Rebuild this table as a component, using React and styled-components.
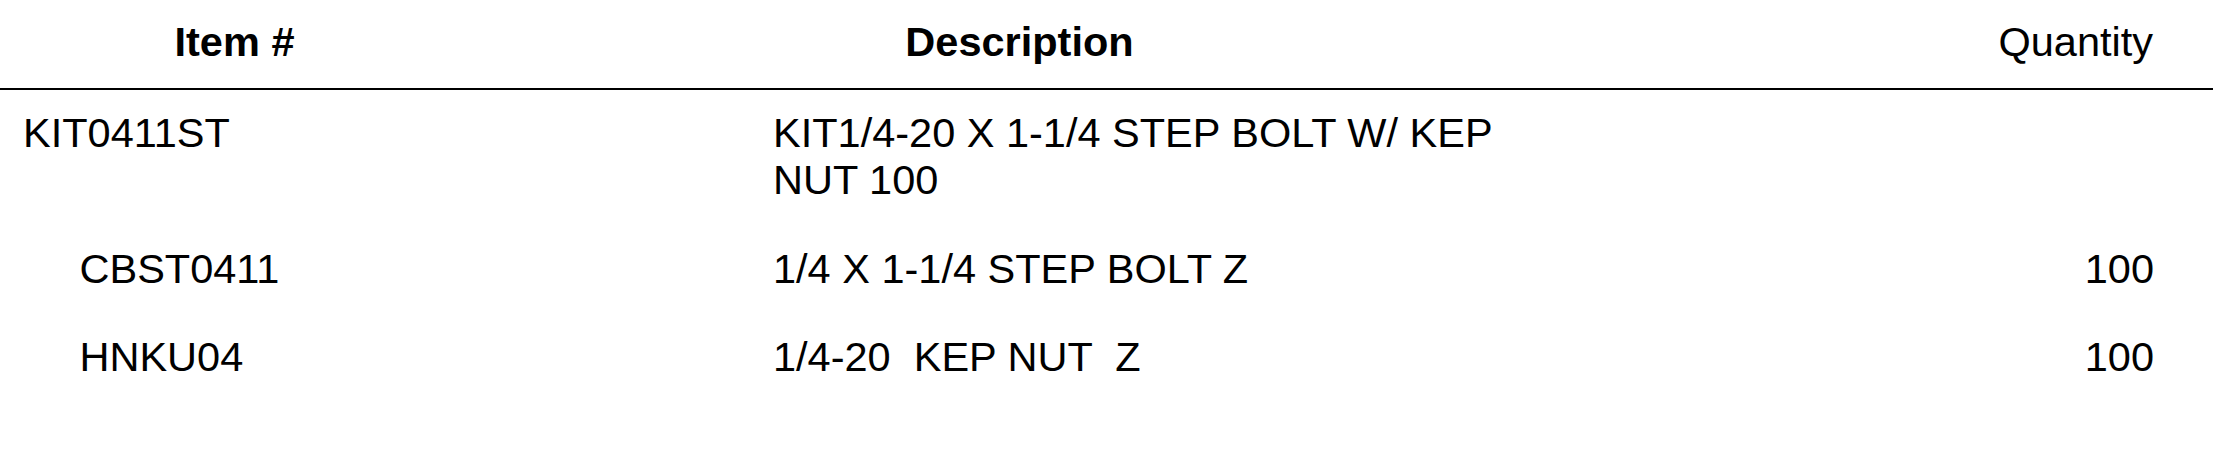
import React from 'react';
import styled, { createGlobalStyle } from 'styled-components';

const GlobalStyle = createGlobalStyle`
  body {
    margin: 0;
    background: #fff;
    color: #000;
    font-family: "Liberation Sans", Arial, sans-serif;
  }
`;

const Table = styled.div`
  width: 2213px;
  font-size: 41.5px;
  line-height: 47.5px;
`;

const Grid = styled.div`
  display: grid;
  grid-template-columns: 469px 1101px 1fr;
`;

const HeaderRow = styled(Grid)`
  padding: 18.4px 0 22.1px;
  border-bottom: 2px solid #000;
`;

const HeaderCell = styled.div`
  font-weight: ${(p) => (p.$bold ? 700 : 400)};
  text-align: ${(p) => p.$align || 'center'};
  padding-right: ${(p) => (p.$align === 'right' ? '60px' : '0')};
`;

const Row = styled(Grid)`
  padding: 19px 0 22px;
`;

const ItemCell = styled.div`
  padding-left: ${(p) => (p.$child ? '79.5px' : '23px')};
`;

const DescCell = styled.div`
  padding-left: 304px;
  padding-right: 17px;
  white-space: pre-wrap;
`;

const QtyCell = styled.div`
  text-align: right;
  padding-right: 59px;
`;

const rows = [
  { item: 'KIT0411ST', desc: 'KIT1/4-20 X 1-1/4 STEP BOLT W/ KEP NUT 100', qty: '' },
  { item: 'CBST0411', desc: '1/4 X 1-1/4 STEP BOLT Z', qty: '100', child: true },
  { item: 'HNKU04', desc: '1/4-20  KEP NUT  Z', qty: '100', child: true },
];

export default function App() {
  return (
    <>
      <GlobalStyle />
      <Table>
        <HeaderRow>
          <HeaderCell $bold>Item #</HeaderCell>
          <HeaderCell $bold>Description</HeaderCell>
          <HeaderCell $align="right">Quantity</HeaderCell>
        </HeaderRow>
        {rows.map((r) => (
          <Row key={r.item}>
            <ItemCell $child={r.child}>{r.item}</ItemCell>
            <DescCell>{r.desc}</DescCell>
            <QtyCell>{r.qty}</QtyCell>
          </Row>
        ))}
      </Table>
    </>
  );
}
